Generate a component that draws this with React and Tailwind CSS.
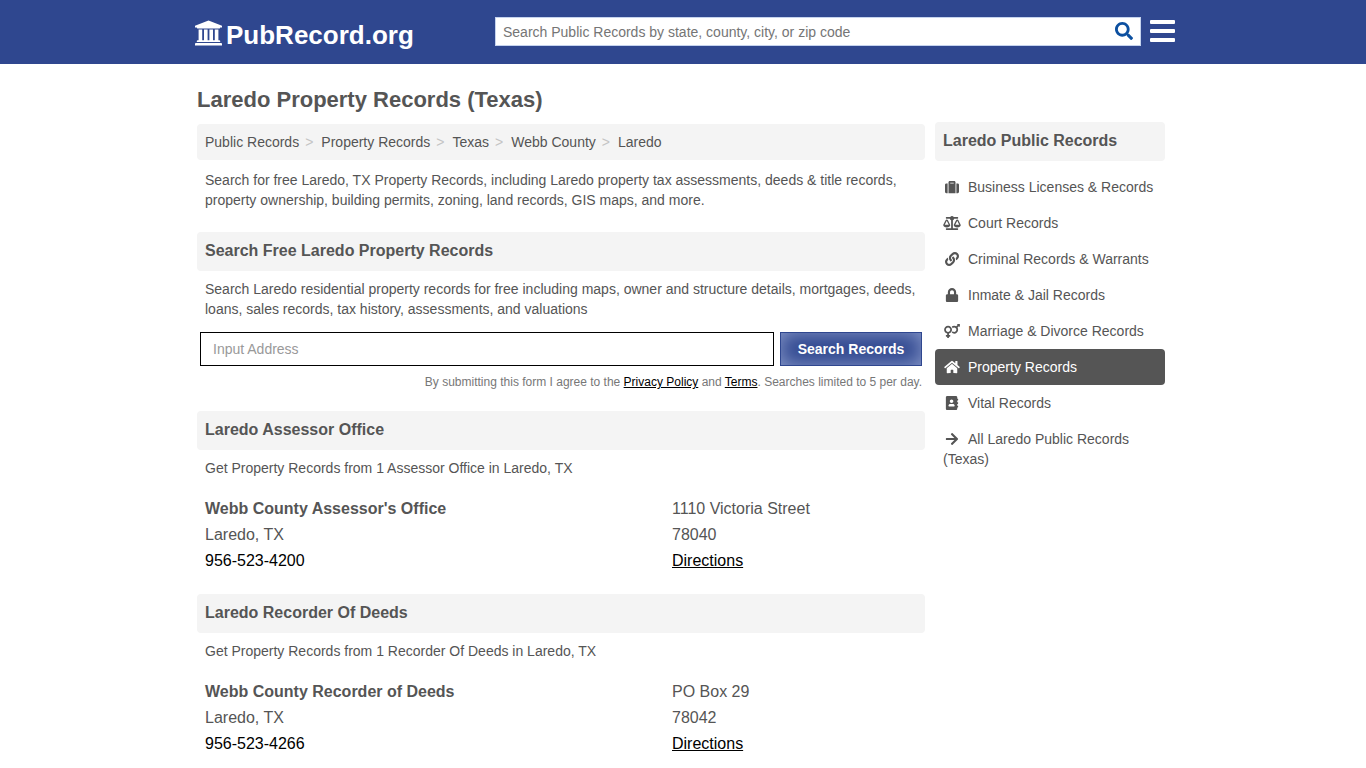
import {
  FaAddressBook,
  FaArrowRight,
  FaBalanceScale,
  FaHome,
  FaLink,
  FaLock,
  FaSearch,
  FaSuitcase,
  FaVenusMars
} from "react-icons/fa";

const breadcrumbs = ["Public Records", "Property Records", "Texas", "Webb County", "Laredo"];

const sidebarLinks = [
  { label: "Business Licenses & Records", icon: FaSuitcase },
  { label: "Court Records", icon: FaBalanceScale },
  { label: "Criminal Records & Warrants", icon: FaLink },
  { label: "Inmate & Jail Records", icon: FaLock },
  { label: "Marriage & Divorce Records", icon: FaVenusMars },
  { label: "Property Records", icon: FaHome, active: true },
  { label: "Vital Records", icon: FaAddressBook },
  { label: "All Laredo Public Records (Texas)", icon: FaArrowRight }
];

const offices = [
  {
    title: "Laredo Assessor Office",
    intro: "Get Property Records from 1 Assessor Office in Laredo, TX",
    name: "Webb County Assessor's Office",
    city: "Laredo, TX",
    phone: "956-523-4200",
    street: "1110 Victoria Street",
    zip: "78040"
  },
  {
    title: "Laredo Recorder Of Deeds",
    intro: "Get Property Records from 1 Recorder Of Deeds in Laredo, TX",
    name: "Webb County Recorder of Deeds",
    city: "Laredo, TX",
    phone: "956-523-4266",
    street: "PO Box 29",
    zip: "78042"
  }
];

// four-column courthouse mark
function CourthouseIcon({ className }) {
  return (
    <svg viewBox="0 0 1920 1792" fill="currentColor" aria-hidden="true" className={className}>
      <path d="M960 0l960 384v128h-128q0 26-20.5 45t-48.5 19h-1526q-28 0-48.5-19t-20.5-45h-128v-128zM256 640h256v768h128v-768h256v768h128v-768h256v768h128v-768h256v768h59q28 0 48.5 19t20.5 45v64h-1664v-64q0-26 20.5-45t48.5-19h59v-768zM1851 1600q28 0 48.5 19t20.5 45v128h-1920v-128q0-26 20.5-45t48.5-19h1782z" />
    </svg>
  );
}

function SectionTitle({ children }) {
  return (
    <h2 className="rounded bg-[#f4f4f4] px-2 pt-[7px] pb-2 text-base leading-6 font-bold">{children}</h2>
  );
}

function SiteHeader() {
  return (
    <header className="bg-[#2f478f]">
      <div className="mx-auto flex h-16 max-w-[984px] items-center pb-[2px] pl-1">
        <a
          href="#"
          className="flex w-[300px] shrink-0 items-center gap-1 pt-1 text-[26px] leading-8 font-bold text-white"
        >
          <CourthouseIcon className="h-[26px] w-[27px]" />
          <span className="pt-1">PubRecord.org</span>
        </a>
        <form
          className="flex h-[29px] min-w-0 flex-1 items-center border border-[#c5d3ee] bg-white"
          onSubmit={(e) => e.preventDefault()}
        >
          <input
            type="text"
            aria-label="Search public records"
            placeholder="Search Public Records by state, county, city, or zip code"
            className="min-w-0 flex-1 px-[7px] pt-px text-sm text-[#555] outline-none placeholder:text-[#757575]"
          />
          <button type="submit" aria-label="Search" className="px-[7px] text-[#0c50a0]">
            <FaSearch className="h-[18px] w-[18px]" />
          </button>
        </form>
        <button type="button" aria-label="Menu" className="ml-[9px] flex w-[25px] flex-col gap-[5px]">
          <span className="h-1 w-full rounded-[1px] bg-white" />
          <span className="h-1 w-full rounded-[1px] bg-white" />
          <span className="h-1 w-full rounded-[1px] bg-white" />
        </button>
      </div>
    </header>
  );
}

function Breadcrumbs() {
  return (
    <nav aria-label="Breadcrumb" className="mt-[10px] rounded bg-[#f4f4f4] px-2 py-2">
      <ol className="flex flex-wrap">
        {breadcrumbs.map((label, index) => (
          <li key={label}>
            <a href="#">{label}</a>
            {index < breadcrumbs.length - 1 && <span className="mr-2 pl-[6px] text-[#c4c4c4]">&gt;</span>}
          </li>
        ))}
      </ol>
    </nav>
  );
}

function AddressSearch() {
  return (
    <section className="mt-[22px]">
      <SectionTitle>Search Free Laredo Property Records</SectionTitle>
      <p className="mt-2 px-2">
        Search Laredo residential property records for free including maps, owner and structure details, mortgages,
        deeds, loans, sales records, tax history, assessments, and valuations
      </p>
      <form className="mt-[13px] flex gap-[6px] px-[3px]" onSubmit={(e) => e.preventDefault()}>
        <input
          type="text"
          aria-label="Input Address"
          placeholder="Input Address"
          className="h-[34px] min-w-0 flex-1 border border-black px-3 text-sm outline-none placeholder:text-[#999]"
        />
        <button
          type="submit"
          className="h-[34px] w-[142px] border border-[#2f478f] bg-[#2f478f] text-sm font-bold text-white shadow-[inset_0_0_20px_#8b9bcb]"
        >
          Search Records
        </button>
      </form>
      <p className="mt-[6px] px-[3px] text-right text-xs leading-5 text-[#777]">
        By submitting this form I agree to the{" "}
        <a href="#" className="text-black underline">
          Privacy Policy
        </a>{" "}
        and{" "}
        <a href="#" className="text-black underline">
          Terms
        </a>
        . Searches limited to 5 per day.
      </p>
    </section>
  );
}

function OfficeSection({ office }) {
  return (
    <section className="mt-[19px] mb-5">
      <SectionTitle>{office.title}</SectionTitle>
      <p className="mt-2 px-2">{office.intro}</p>
      <div className="mt-[18px] grid grid-cols-[467fr_253fr] pl-2 text-base leading-[26px]">
        <div>
          <h3 className="font-bold">{office.name}</h3>
          <p>{office.city}</p>
          <a href="#" className="text-black">
            {office.phone}
          </a>
        </div>
        <div>
          <p>{office.street}</p>
          <p>{office.zip}</p>
          <a href="#" className="text-black underline">
            Directions
          </a>
        </div>
      </div>
    </section>
  );
}

function Sidebar() {
  return (
    <aside className="w-[230px] shrink-0 pt-[36px]">
      <SectionTitle>Laredo Public Records</SectionTitle>
      <ul className="mt-2">
        {sidebarLinks.map(({ label, icon: Icon, active }) => (
          <li key={label}>
            <a href="#" className={`block rounded px-2 py-2 ${active ? "bg-[#555] text-white" : ""}`}>
              <Icon className="mr-[7px] mb-[2px] inline-block h-[14px] w-[18px]" />
              {label}
            </a>
          </li>
        ))}
      </ul>
    </aside>
  );
}

export default function App() {
  return (
    <div className="bg-white font-['Liberation_Sans',Arial,sans-serif] text-sm leading-5 text-[#555]">
      <SiteHeader />
      <div className="mx-auto flex max-w-[980px] gap-[10px] pt-[22px] pr-2 pl-1">
        <main className="min-w-0 flex-1">
          <h1 className="text-[22px] leading-7 font-bold">Laredo Property Records (Texas)</h1>
          <Breadcrumbs />
          <p className="mt-[10px] px-2">
            Search for free Laredo, TX Property Records, including Laredo property tax assessments, deeds &amp; title
            records, property ownership, building permits, zoning, land records, GIS maps, and more.
          </p>
          <AddressSearch />
          {offices.map((office) => (
            <OfficeSection key={office.title} office={office} />
          ))}
        </main>
        <Sidebar />
      </div>
    </div>
  );
}
